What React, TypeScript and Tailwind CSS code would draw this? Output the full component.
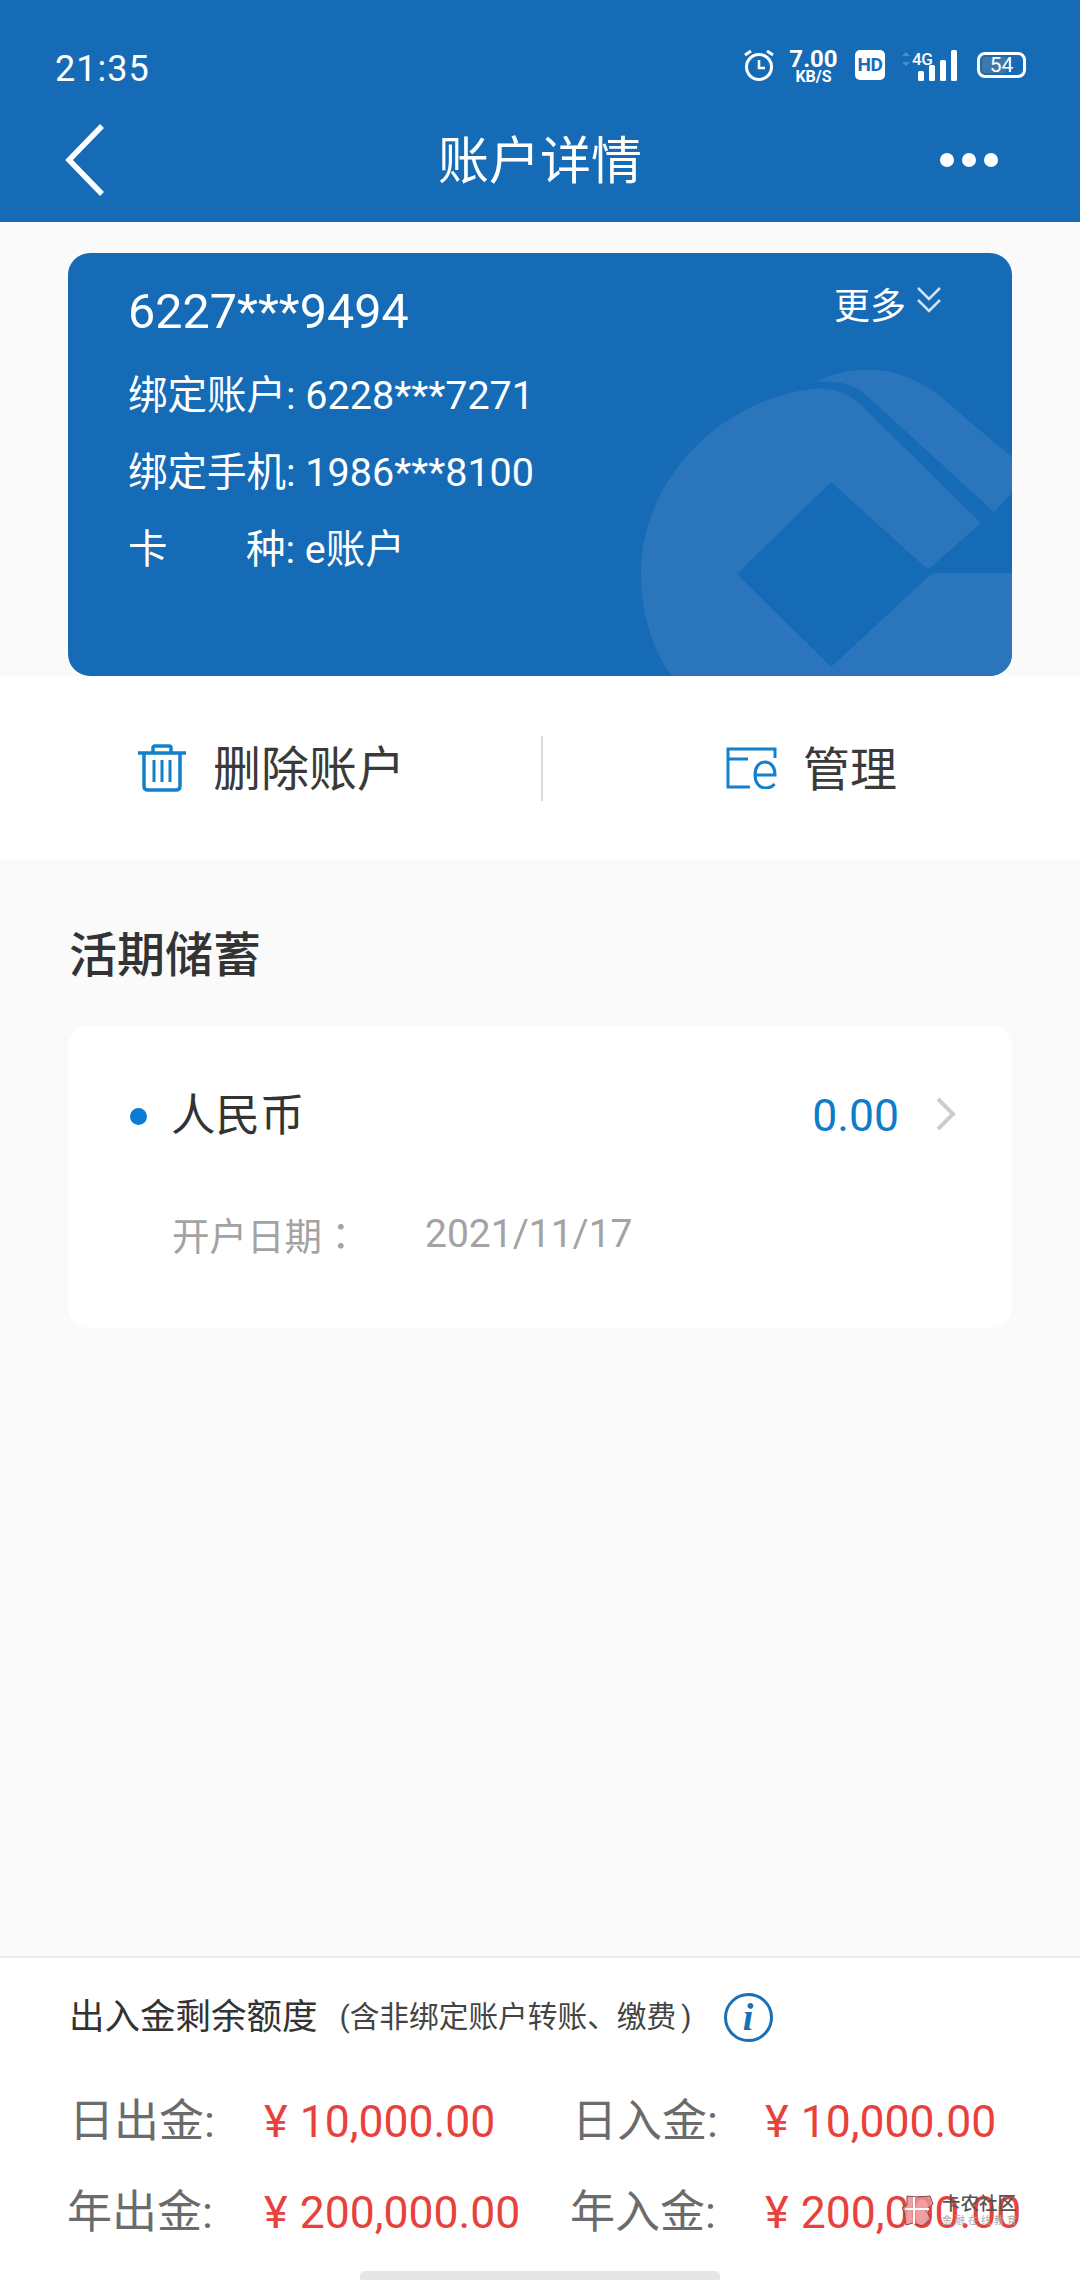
const font = "[font-family:Roboto,'Noto_Sans_CJK_SC',sans-serif]";

function Alarm() {
  return (
    <svg width="30" height="32" viewBox="0 0 30 32" fill="none" stroke="white" strokeWidth="3">
      <circle cx="15" cy="18" r="12.5" />
      <path d="M15 11v8h6" strokeWidth="2.6" />
      <path d="M1 6l6-4M29 6l-6-4" strokeWidth="3" />
    </svg>
  );
}

function Signal() {
  return (
    <div className="relative w-[56px] h-[32px]">
      <svg width="56" height="32" viewBox="0 0 56 32" fill="white" className="absolute inset-0">
        <path d="M1 6l4-4 4 4zM1 12l4 4 4-4z" fill="#4b8ecb" />
        <rect x="17" y="21" width="6" height="10" rx="1.5" />
        <rect x="28" y="15" width="6" height="16" rx="1.5" />
        <rect x="39" y="10" width="6" height="21" rx="1.5" />
        <rect x="50" y="0" width="6" height="31" rx="1.5" />
      </svg>
      <span className="absolute left-[11px] top-[0px] text-[17px] leading-[18px] font-medium tracking-[-0.5px] text-white">4G</span>
    </div>
  );
}

function Battery() {
  return (
    <div className="relative w-[49px] h-[26px] rounded-[8px] border-[3px] border-white overflow-hidden flex items-center justify-center">
      <div className="absolute left-[2px] top-[2px] bottom-[2px] w-[24px] bg-[#3f78a8] rounded-l-[3px]" />
      <span className="relative text-[21px] leading-none text-white">54</span>
    </div>
  );
}

function StatusBar() {
  return (
    <div className="h-[104px] pt-[49px] pl-[55px] pr-[54px] flex items-start justify-between">
      <span className="text-[36px] leading-[40px] tracking-[1px] text-white">21:35</span>
      <div className="flex items-start">
        <Alarm />
        <div className="ml-[16px] w-[47px] flex flex-col items-center text-white font-bold">
          <span className="text-[24px] leading-[20px]">7.00</span>
          <span className="text-[16px] leading-[14px] mt-[1px]">KB/S</span>
        </div>
        <div className="ml-[18px] mt-[1px] w-[30px] h-[30px] bg-white rounded-[5px] flex items-center justify-center text-[#166bb7] text-[19px] font-bold tracking-[-0.5px]">HD</div>
        <div className="ml-[16px] mt-[1px]"><Signal /></div>
        <div className="ml-[20px] mt-[3px]"><Battery /></div>
      </div>
    </div>
  );
}

function NavBar() {
  return (
    <div className="relative h-[118px] flex items-center justify-between pl-[63px] pr-[82px] pb-[6px]">
      <svg width="44" height="74" viewBox="0 0 44 74" fill="none" stroke="white" strokeWidth="5.5">
        <path d="M39 3L6 37l33 34" />
      </svg>
      <span className="absolute inset-x-0 top-[18px] text-center text-[51px] leading-[80px] text-white">账户详情</span>
      <div className="flex gap-[8px]">
        <span className="w-[14px] h-[14px] rounded-full bg-white" />
        <span className="w-[14px] h-[14px] rounded-full bg-white" />
        <span className="w-[14px] h-[14px] rounded-full bg-white" />
      </div>
    </div>
  );
}

function Watermark() {
  return (
    <svg viewBox="68 253 944 423" className="absolute inset-0 w-full h-full" fill="#2a75bc">
      <path d="M812 389C720 400 641 480 641 573C641 612 652 650 672 676L1012 676L1012 573L936 573Q932 573 929 576L831 667L737 574L831 482L924 566Q928 570 932 566L981 523L866 410C850 392 830 387 812 389Z" />
      <path d="M816 382C835 372 855 369 875 370C905 371 935 390 950 405L1012 457L1012 493L994 512L866 395C855 385 838 380 816 382Z" />
    </svg>
  );
}

function AccountCard() {
  return (
    <div className="relative mx-[68px] h-[423px] rounded-[22px] bg-[#166bb7] overflow-hidden text-white">
      <Watermark />
      <div className="relative pl-[60px] pt-[31px]">
        <div className="text-[48.500px] leading-[56px]">6227***9494</div>
        <div className="mt-[31px] flex flex-col gap-[27px] text-[39.500px] leading-[50px]">
          <div>绑定账户: 6228***7271</div>
          <div>绑定手机: 1986***8100</div>
          <div className="flex">
            <span className="w-[118px]">卡</span>
            <span>种: e账户</span>
          </div>
        </div>
      </div>
      <div className="absolute top-[30px] right-[70px] flex items-start gap-[10px]">
        <span className="text-[36px] leading-[48px]">更多</span>
        <svg width="26" height="28" viewBox="0 0 26 28" fill="none" stroke="#cfe3f5" strokeWidth="2.5" className="mt-[3px]">
          <path d="M2 2l11 11L24 2M2 14l11 11 11-11" />
        </svg>
      </div>
    </div>
  );
}

function TrashIcon() {
  return (
    <svg width="50" height="48" viewBox="0 0 50 48" fill="none" stroke="#1380cc" strokeWidth="3.5">
      <path d="M1 9h48" />
      <path d="M16 8V4q0-2 2-2h14q2 0 2 2v4" />
      <path d="M7 9v33q0 4 4 4h28q4 0 4-4V9" />
      <path d="M17 16v22M25 16v22M33 16v22" strokeWidth="3" />
    </svg>
  );
}

function ManageIcon() {
  return (
    <svg width="51" height="42" viewBox="0 0 51 42" fill="none" stroke="#1380cc" strokeWidth="3">
      <path d="M24 40H2V2h47v9" />
      <path d="M2 12h20" />
      <path d="M29 28h20c0-8-4-13-10-13s-10 5-10 13 4.500 13 10.500 13c4 0 7-1.500 9-4" />
    </svg>
  );
}

function Actions() {
  return (
    <div className="h-[184px] bg-white flex items-center">
      <div className="relative w-[541px] h-[64px] flex items-center pl-[137px] gap-[26px]">
        <TrashIcon />
        <span className="text-[48px] leading-[64px] text-[#3a3a3a] pt-[3px]">删除账户</span>
      </div>
      <div className="w-[2px] h-[65px] bg-[#d8d8d8]" />
      <div className="flex items-center pl-[183px] gap-[26px]">
        <ManageIcon />
        <span className="text-[47px] leading-[64px] text-[#3a3a3a] pt-[3px]">管理</span>
      </div>
    </div>
  );
}

function SavingsCard() {
  return (
    <div className="mx-[68px] mt-[36px] h-[303px] rounded-[22px] bg-white pl-[62px] pr-[55px] pt-[62px]">
      <div className="flex items-center h-[58px]">
        <span className="w-[17px] h-[17px] rounded-full bg-[#0b7bd4]" />
        <span className="ml-[24px] text-[44.500px] leading-[58px] text-[#333333]">人民币</span>
        <span className="ml-auto text-[44.500px] leading-[58px] text-[#0f7bcb]">0.00</span>
        <svg width="22" height="34" viewBox="0 0 22 34" fill="none" stroke="#cccccc" strokeWidth="4" className="ml-[36px] mb-[4px]">
          <path d="M3 2l15 15L3 32" />
        </svg>
      </div>
      <div className="mt-[64px] ml-[42px] flex text-[37.500px] leading-[50px] text-[#a3a3a3]">
        <span className="w-[253px]">
          开户日期<span className="[font-family:'Noto_Sans_CJK_TC',sans-serif]">：</span>
        </span>
        <span className="text-[39px]">2021/11/17</span>
      </div>
    </div>
  );
}

function LimitCell({ label, value, labelWidth, width }: { label: string; value: string; labelWidth: string; width: string }) {
  return (
    <div className={`flex items-center ${width}`}>
      <span className={`text-[45px] leading-[60px] text-[#6b6b6b] ${labelWidth}`}>{label}</span>
      <span className="text-[45px] leading-[60px] text-[#e8413c]">¥</span>
      <span className="ml-[12px] text-[44.500px] leading-[60px] text-[#e8413c]">{value}</span>
    </div>
  );
}

function LimitPanel() {
  return (
    <div className="h-[324px] border-t-2 border-[#ececec] bg-white pt-[30px] relative">
      <div className="flex items-center h-[58px] pl-[69px]">
        <span className="text-[35.500px] leading-[50px] text-[#333333]">出入金剩余额度</span>
        <span className="ml-[22px] text-[29.700px] leading-[50px] text-[#444444]">(含非绑定账户转账、缴费<span className="ml-[5px]">)</span></span>
        <span className="ml-[32px] w-[49px] h-[49px] rounded-full border-[3px] border-[#1a6fb5] flex items-center justify-center text-[#1a6fb5] text-[38px] leading-none font-bold italic [font-family:'Liberation_Serif',serif]">i</span>
      </div>
      <div className="mt-[46px] pl-[69px] flex">
        <LimitCell label="日出金:" value="10,000.00" labelWidth="w-[195px]" width="w-[503px]" />
        <LimitCell label="日入金:" value="10,000.00" labelWidth="w-[193px]" width="" />
      </div>
      <div className="mt-[31px] pl-[67px] flex">
        <LimitCell label="年出金:" value="200,000.00" labelWidth="w-[197px]" width="w-[503px]" />
        <LimitCell label="年入金:" value="200,000.00" labelWidth="w-[195px]" width="" />
      </div>
      {/* forum watermark stamped over the last amount */}
      <div className="absolute left-[902px] top-[236px] flex items-start whitespace-nowrap">
        <svg width="32" height="33" viewBox="0 0 32 33" className="shrink-0">
          <path d="M5 2l10 1 13-1 3 8-7 6 5 9-9 7-9-3-7 2-2-14-2-3 5-3z" fill="#ec8d90" fillOpacity="0.85" stroke="#7a4a4a" strokeWidth="1" />
          <path d="M12 3v27M3 15h24" stroke="#ffffff" strokeWidth="2" />
        </svg>
        <div className="ml-[8px] flex flex-col">
          <span className="text-[18.500px] leading-[21px] font-medium text-[#555555]">卡农社区</span>
          <span className="text-[10px] leading-[12px] tracking-[3px] text-[#aaaaaa]">金融在线教育</span>
        </div>
      </div>
      <div className="absolute left-[360px] bottom-0 w-[360px] h-[9px] rounded-t-[5px] bg-[#e6e6e6]" />
    </div>
  );
}

export default function App() {
  return (
    <div className={`w-[1080px] h-[2280px] bg-[#fafafa] flex flex-col ${font}`}>
      <div className="h-[222px] bg-[#166bb7]">
        <StatusBar />
        <NavBar />
      </div>
      <div className="pt-[31px]">
        <AccountCard />
      </div>
      <Actions />
      <div className="pt-[63px] pl-[69px] text-[48px] leading-[66px] font-medium text-[#333333]">活期储蓄</div>
      <SavingsCard />
      <div className="flex-1" />
      <LimitPanel />
    </div>
  );
}
